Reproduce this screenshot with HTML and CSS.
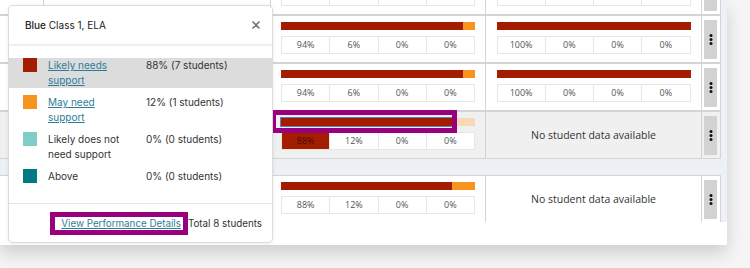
FILE: index.html
```html
<html>
	<head>
		<meta name="viewport" content="width=device-width, initial-scale=1">
		<title>Class Performance</title>
		<link rel="stylesheet" href="styles.css">
	</head>
	<body>
		<div class="panel">
			<div class="table">
				<div class="row first">
					<div class="cell name-a"></div>
					<div class="cell name-b"></div>
					<div class="cell score">
						<div class="bar"><div class="seg red" style="width: 94%"></div><div class="seg orange" style="width: 6%"></div></div>
						<div class="pcts"><div class="pct"></div><div class="pct"></div><div class="pct"></div><div class="pct"></div></div>
					</div>
					<div class="cell score">
						<div class="bar"><div class="seg red" style="width: 100%"></div></div>
						<div class="pcts"><div class="pct"></div><div class="pct"></div><div class="pct"></div><div class="pct"></div></div>
					</div>
					<div class="cell menu"><button class="dots"><svg width="4" height="11" viewBox="0 0 4 11"><circle cx="2" cy="1.6" r="1.5"/><circle cx="2" cy="5.5" r="1.5"/><circle cx="2" cy="9.4" r="1.5"/></svg></button></div>
				</div>
				<div class="row">
					<div class="cell name-a"></div>
					<div class="cell name-b"></div>
					<div class="cell score">
						<div class="bar"><div class="seg red" style="width: 94%"></div><div class="seg orange" style="width: 6%"></div></div>
						<div class="pcts"><div class="pct">94%</div><div class="pct">6%</div><div class="pct">0%</div><div class="pct">0%</div></div>
					</div>
					<div class="cell score">
						<div class="bar"><div class="seg red" style="width: 100%"></div></div>
						<div class="pcts"><div class="pct">100%</div><div class="pct">0%</div><div class="pct">0%</div><div class="pct">0%</div></div>
					</div>
					<div class="cell menu"><button class="dots"><svg width="4" height="11" viewBox="0 0 4 11"><circle cx="2" cy="1.6" r="1.5"/><circle cx="2" cy="5.5" r="1.5"/><circle cx="2" cy="9.4" r="1.5"/></svg></button></div>
				</div>
				<div class="row">
					<div class="cell name-a"></div>
					<div class="cell name-b"></div>
					<div class="cell score">
						<div class="bar"><div class="seg red" style="width: 94%"></div><div class="seg orange" style="width: 6%"></div></div>
						<div class="pcts"><div class="pct">94%</div><div class="pct">6%</div><div class="pct">0%</div><div class="pct">0%</div></div>
					</div>
					<div class="cell score">
						<div class="bar"><div class="seg red" style="width: 100%"></div></div>
						<div class="pcts"><div class="pct">100%</div><div class="pct">0%</div><div class="pct">0%</div><div class="pct">0%</div></div>
					</div>
					<div class="cell menu"><button class="dots"><svg width="4" height="11" viewBox="0 0 4 11"><circle cx="2" cy="1.6" r="1.5"/><circle cx="2" cy="5.5" r="1.5"/><circle cx="2" cy="9.4" r="1.5"/></svg></button></div>
				</div>
				<div class="row selected">
					<div class="cell name-a"></div>
					<div class="cell name-b"></div>
					<div class="cell score">
						<div class="bar"><div class="seg red focused" style="width: 88%"></div><div class="seg orange faded" style="width: 12%"></div></div>
						<div class="pcts"><div class="pct active">88%</div><div class="pct">12%</div><div class="pct">0%</div><div class="pct">0%</div></div>
					</div>
					<div class="cell no-data">No student data available</div>
					<div class="cell menu"><button class="dots"><svg width="4" height="11" viewBox="0 0 4 11"><circle cx="2" cy="1.6" r="1.5"/><circle cx="2" cy="5.5" r="1.5"/><circle cx="2" cy="9.4" r="1.5"/></svg></button></div>
				</div>
				<div class="row">
					<div class="cell name-a"></div>
					<div class="cell name-b"></div>
					<div class="cell score">
						<div class="bar"><div class="seg red" style="width: 88%"></div><div class="seg orange" style="width: 12%"></div></div>
						<div class="pcts"><div class="pct">88%</div><div class="pct">12%</div><div class="pct">0%</div><div class="pct">0%</div></div>
					</div>
					<div class="cell no-data">No student data available</div>
					<div class="cell menu"><button class="dots"><svg width="4" height="11" viewBox="0 0 4 11"><circle cx="2" cy="1.6" r="1.5"/><circle cx="2" cy="5.5" r="1.5"/><circle cx="2" cy="9.4" r="1.5"/></svg></button></div>
				</div>
			</div>

			<div class="popup">
				<div class="pop-head">
					<div class="pop-title"><span class="medium">Blue</span> Class 1, ELA</div>
					<svg class="close" width="8" height="8" viewBox="0 0 8 8"><path d="M1 1 L7 7 M7 1 L1 7" stroke="#777" stroke-width="1.7" stroke-linecap="round"/></svg>
				</div>
				<div class="pop-body">
					<div class="item current">
						<div class="swatch red"></div>
						<a class="label link" href="#">Likely needs support</a>
						<div class="value">88% (7 students)</div>
					</div>
					<div class="item">
						<div class="swatch orange"></div>
						<a class="label link" href="#">May need support</a>
						<div class="value">12% (1 students)</div>
					</div>
					<div class="item">
						<div class="swatch mint"></div>
						<div class="label">Likely does not need support</div>
						<div class="value">0% (0 students)</div>
					</div>
					<div class="item">
						<div class="swatch teal"></div>
						<div class="label">Above</div>
						<div class="value">0% (0 students)</div>
					</div>
				</div>
				<div class="pop-foot">
					<a class="details link" href="#">View Performance Details</a>
					<span class="total">Total 8 students</span>
				</div>
			</div>
		</div>
	</body>
</html>
```

FILE: styles.css
```css
body {
	margin: 0;
	background: #f5f5f5;
	font-family: "Open Sans", sans-serif;
	color: #333;
}

.panel {
	position: relative;
	width: 727px;
	height: 245px;
	background: #fff;
	box-shadow: 0 8px 16px rgba(0, 0, 0, 0.16);
	overflow: hidden;
}

.table {
	height: 222px;
	padding-right: 6px;
	background: #edf1f5;
	overflow: hidden;
}

.row {
	display: flex;
	height: 48px;
	box-sizing: border-box;
	background: #fff;
	border-top: 1px solid #d4d4d4;
	border-bottom: 1px solid #d4d4d4;
}

.row.first {
	margin-top: -33px;
}

.row.selected {
	background: #f0f0f0;
	margin-bottom: 16px;
}

.cell {
	box-sizing: border-box;
	border-right: 1px solid #d4d4d4;
}

.name-a {
	width: 44px;
}

.name-b {
	width: 227px;
}

.score {
	width: 215px;
	padding: 6px 10px 0 10px;
}

.score + .score {
	width: 216px;
}

.bar {
	display: flex;
	width: 194px;
	height: 8px;
	margin: 0 auto 6px auto;
}

.seg.red {
	background: #a51d00;
}

.seg.orange {
	background: #f7941d;
}

.seg.focused {
	position: relative;
	box-shadow: 0 0 0 1px #5a7fd8;
}

.seg.focused::after {
	content: "";
	position: absolute;
	left: -10px;
	right: -5px;
	top: -8px;
	bottom: -7px;
	border: 5px solid #99007e;
}

.seg.faded {
	background: #f9d8b6;
}

.pcts {
	display: flex;
	width: 194px;
	height: 18px;
	margin: 0 auto;
	box-sizing: border-box;
	border: 1px solid #e6e6e6;
	background: #fff;
}

.pct {
	flex: 1;
	font-size: 9px;
	line-height: 16px;
	text-align: center;
	color: #555;
}

.pct + .pct {
	border-left: 1px solid #e6e6e6;
}

.pct.active {
	background: #a51d00;
	color: #4a0b00;
}

.no-data {
	width: 216px;
	display: flex;
	align-items: center;
	justify-content: center;
	font-size: 10.5px;
	color: #333;
}

.menu {
	width: 19px;
	padding: 4px 2px 3px 2px;
}

.dots {
	display: flex;
	align-items: center;
	justify-content: center;
	width: 13px;
	height: 39px;
	padding: 0;
	border: none;
	background: #d2d2d2;
}

.dots svg {
	fill: #111;
}

.popup {
	position: absolute;
	left: 8px;
	top: 5px;
	width: 265px;
	height: 238px;
	box-sizing: border-box;
	display: flex;
	flex-direction: column;
	background: #fff;
	border: 1px solid #dcdcdc;
	border-radius: 5px;
	box-shadow: 0 1px 4px rgba(0, 0, 0, 0.08);
	font-family: Inter, sans-serif;
	font-size: 10px;
	color: #333;
}

.pop-head {
	display: flex;
	align-items: center;
	justify-content: space-between;
	height: 40px;
	box-sizing: border-box;
	padding: 0 12px 0 16px;
	border-bottom: 2px solid #efefef;
}

.pop-title {
	color: #222;
}

.medium {
	font-weight: 500;
}

.pop-body {
	flex: 1;
	padding-top: 12px;
}

.item {
	display: flex;
	align-items: flex-start;
	padding-left: 14px;
	margin-bottom: 7px;
	line-height: 15px;
}

.item.current {
	background: #dcdcdc;
}

.swatch {
	width: 14px;
	height: 14px;
	margin-right: 11px;
	flex-shrink: 0;
}

.swatch.red {
	background: #a51d00;
}

.swatch.orange {
	background: #f7941d;
}

.swatch.mint {
	background: #7fcdc4;
}

.swatch.teal {
	background: #007a87;
}

.label {
	width: 78px;
	margin-right: 20px;
}

.link {
	color: #2d7d9a;
	text-decoration: underline;
}

.pop-foot {
	display: flex;
	align-items: center;
	justify-content: flex-end;
	height: 39px;
	box-sizing: border-box;
	padding-right: 10px;
	border-top: 1px solid #e6e6e6;
}

.details {
	line-height: 13px;
	padding: 0 2px 0 6px;
	border: 5px solid #99007e;
	font-size: 9.8px;
}

.total {
	font-size: 9.8px;
}
```
